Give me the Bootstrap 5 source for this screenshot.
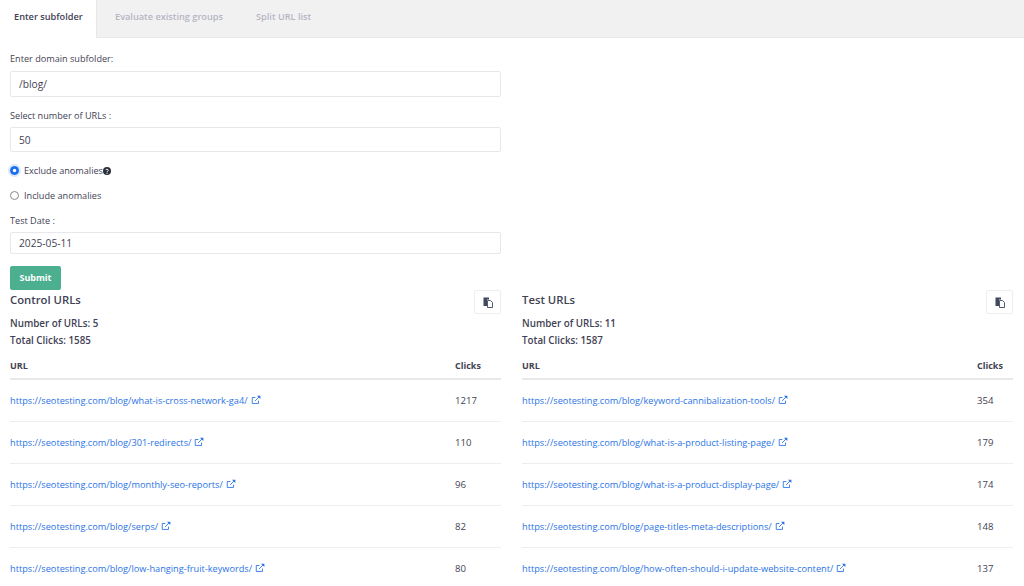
<!DOCTYPE html>
<html lang="en">
<head>
<meta charset="utf-8">
<title>URL groups</title>
<link href="https://cdn.jsdelivr.net/npm/bootstrap@5.3.0/dist/css/bootstrap.min.css" rel="stylesheet">
<style>
html,body{height:586px;overflow:hidden}
body{font-family:"Open Sans","Noto Sans",sans-serif;font-size:9.15px;color:#3f4254;background:#fff}
.tabbar{background:#f1f1f2;height:38px;border-bottom:1px solid #e8e8ea}
.tabitem{height:38px;padding:0 16px 5px;font-weight:600;font-size:9.2px;line-height:13px;color:#b5b5c3;border:0;background:transparent}
.tabitem.on{background:#fff;color:#3f4254;width:97px;padding:0 0 5px 14px;text-align:left;border-right:1px solid #e8e8ea}
.tabitem.second{padding-left:18px}
.tabitem.third{padding-left:17px}
.pagebody{padding:0 10px}
.formcol{width:491px;padding-top:14px}
.flabel{display:block;line-height:13px;margin:0 0 6px;color:#3f4254}
.flabel.tight{margin-bottom:5px}
.finput{height:26px;border:1px solid #e8e8ea;border-radius:2px;padding:0 8px;font-size:10.2px;color:#3f4254;display:block;width:100%;margin-bottom:12px;background:#fff}
.finput.mid{height:25px}
.finput.low{height:22px;margin-bottom:0}
.radioline{display:flex;align-items:center;gap:5px;height:13px;margin-bottom:12px;line-height:13px}
.radioline .form-check-input{width:9px;height:9px;margin:0;flex:none;border-color:#8a8a8a}
.radioline .form-check-input:checked{background-color:#1a6ff0;border-color:#1a6ff0;box-shadow:0 0 0 2px #dbe7fb}
.qmark{width:8px;height:8px;display:inline-block;vertical-align:-.5px}
.subbtn{background:#4caf8f;border:1px solid #4caf8f;color:#fff;font-weight:700;font-size:9px;border-radius:2px;width:51px;height:24px;padding:0;display:block;margin-top:12px}
.urlcols{display:grid;grid-template-columns:491px 491px;column-gap:21px}
.urlhead{display:flex;justify-content:space-between;align-items:flex-start;height:24.5px}
.urltitle{font-size:11.3px;font-weight:600;line-height:20px;margin:0;color:#3f4254}
.copybtn{width:27px;height:24px;border:1px solid #eeeef0;background:#fff;border-radius:2px;padding:0;display:flex;align-items:center;justify-content:center}
.copybtn svg{width:10px;height:11px}
.statline{font-weight:600;font-size:9.8px;line-height:17px;color:#3f4254}
.urltable{width:491px;margin:4.5px 0 0;table-layout:fixed;border-collapse:collapse}
.urltable th{font-weight:700;font-size:9px;color:#3f4254;height:26px;padding:0;border-bottom:2px solid #e8e8ea;vertical-align:middle}
.urltable td{height:42px;padding:2px 0 0;border-bottom:1px solid #eeeef0;font-size:9.2px;color:#3f4254;vertical-align:middle}
.urltable td.numcell{font-size:9.6px}
.clickcol{width:46px}
.clickcol.nar{width:36px}
.urltable a{color:#2a74e6;text-decoration:none}
.extico{width:10px;height:10px;vertical-align:-.5px;margin-left:3px}
</style>
</head>
<body>
<ul class="nav tabbar">
  <li class="nav-item"><button class="tabitem on" type="button">Enter subfolder</button></li>
  <li class="nav-item"><button class="tabitem second" type="button">Evaluate existing groups</button></li>
  <li class="nav-item"><button class="tabitem third" type="button">Split URL list</button></li>
</ul>
<main class="pagebody">
  <form class="formcol">
    <label class="flabel" for="sub">Enter domain subfolder:</label>
    <input class="finput" id="sub" value="/blog/">
    <label class="flabel tight" for="num">Select number of URLs :</label>
    <input class="finput mid" id="num" value="50">
    <div class="radioline"><input class="form-check-input" type="radio" name="an" id="ex" checked><label for="ex">Exclude anomalies<svg class="qmark" viewBox="0 0 16 16"><circle cx="8" cy="8" r="8" fill="#2b2f3a"/><path d="M5.5 6.2a2.6 2.6 0 0 1 5 .3c0 1.7-2.3 1.8-2.4 3.4" fill="none" stroke="#fff" stroke-width="1.9"/><circle cx="8.1" cy="12.3" r="1.2" fill="#fff"/></svg></label></div>
    <div class="radioline"><input class="form-check-input" type="radio" name="an" id="in"><label for="in">Include anomalies</label></div>
    <label class="flabel tight" for="dt">Test Date :</label>
    <input class="finput low" id="dt" value="2025-05-11">
    <button class="subbtn" type="button">Submit</button>
  </form>
  <div class="urlcols">
    <section>
      <div class="urlhead"><h2 class="urltitle">Control URLs</h2><button class="copybtn" type="button" aria-label="Copy"><svg viewBox="0 0 20 22"><path d="M1 1h11v4H8v13H1z" fill="#3f4a5f"/><path d="M9 7h6l4 4v10H9z" fill="#fff" stroke="#3f4a5f" stroke-width="1.8"/></svg></button></div>
      <div class="statline">Number of URLs: 5</div>
      <div class="statline">Total Clicks: 1585</div>
      <table class="urltable">
        <thead><tr><th>URL</th><th class="clickcol">Clicks</th></tr></thead>
        <tbody>
          <tr><td><a href="#">https://seotesting.com/blog/what-is-cross-network-ga4/<svg class="extico" viewBox="0 0 16 16"><path d="M12 9v4.5H2V4h5" fill="none" stroke="currentColor" stroke-width="1.4"/><path d="M6.5 9.5 14 2" stroke="currentColor" stroke-width="1.4"/><path d="M9.5 1H15v5.5z" fill="currentColor"/></svg></a></td><td class="numcell">1217</td></tr>
          <tr><td><a href="#">https://seotesting.com/blog/301-redirects/<svg class="extico" viewBox="0 0 16 16"><path d="M12 9v4.5H2V4h5" fill="none" stroke="currentColor" stroke-width="1.4"/><path d="M6.5 9.5 14 2" stroke="currentColor" stroke-width="1.4"/><path d="M9.5 1H15v5.5z" fill="currentColor"/></svg></a></td><td class="numcell">110</td></tr>
          <tr><td><a href="#">https://seotesting.com/blog/monthly-seo-reports/<svg class="extico" viewBox="0 0 16 16"><path d="M12 9v4.5H2V4h5" fill="none" stroke="currentColor" stroke-width="1.4"/><path d="M6.5 9.5 14 2" stroke="currentColor" stroke-width="1.4"/><path d="M9.5 1H15v5.5z" fill="currentColor"/></svg></a></td><td class="numcell">96</td></tr>
          <tr><td><a href="#">https://seotesting.com/blog/serps/<svg class="extico" viewBox="0 0 16 16"><path d="M12 9v4.5H2V4h5" fill="none" stroke="currentColor" stroke-width="1.4"/><path d="M6.5 9.5 14 2" stroke="currentColor" stroke-width="1.4"/><path d="M9.5 1H15v5.5z" fill="currentColor"/></svg></a></td><td class="numcell">82</td></tr>
          <tr><td><a href="#">https://seotesting.com/blog/low-hanging-fruit-keywords/<svg class="extico" viewBox="0 0 16 16"><path d="M12 9v4.5H2V4h5" fill="none" stroke="currentColor" stroke-width="1.4"/><path d="M6.5 9.5 14 2" stroke="currentColor" stroke-width="1.4"/><path d="M9.5 1H15v5.5z" fill="currentColor"/></svg></a></td><td class="numcell">80</td></tr>
        </tbody>
      </table>
    </section>
    <section>
      <div class="urlhead"><h2 class="urltitle">Test URLs</h2><button class="copybtn" type="button" aria-label="Copy"><svg viewBox="0 0 20 22"><path d="M1 1h11v4H8v13H1z" fill="#3f4a5f"/><path d="M9 7h6l4 4v10H9z" fill="#fff" stroke="#3f4a5f" stroke-width="1.8"/></svg></button></div>
      <div class="statline">Number of URLs: 11</div>
      <div class="statline">Total Clicks: 1587</div>
      <table class="urltable">
        <thead><tr><th>URL</th><th class="clickcol nar">Clicks</th></tr></thead>
        <tbody>
          <tr><td><a href="#">https://seotesting.com/blog/keyword-cannibalization-tools/<svg class="extico" viewBox="0 0 16 16"><path d="M12 9v4.5H2V4h5" fill="none" stroke="currentColor" stroke-width="1.4"/><path d="M6.5 9.5 14 2" stroke="currentColor" stroke-width="1.4"/><path d="M9.5 1H15v5.5z" fill="currentColor"/></svg></a></td><td class="numcell">354</td></tr>
          <tr><td><a href="#">https://seotesting.com/blog/what-is-a-product-listing-page/<svg class="extico" viewBox="0 0 16 16"><path d="M12 9v4.5H2V4h5" fill="none" stroke="currentColor" stroke-width="1.4"/><path d="M6.5 9.5 14 2" stroke="currentColor" stroke-width="1.4"/><path d="M9.5 1H15v5.5z" fill="currentColor"/></svg></a></td><td class="numcell">179</td></tr>
          <tr><td><a href="#">https://seotesting.com/blog/what-is-a-product-display-page/<svg class="extico" viewBox="0 0 16 16"><path d="M12 9v4.5H2V4h5" fill="none" stroke="currentColor" stroke-width="1.4"/><path d="M6.5 9.5 14 2" stroke="currentColor" stroke-width="1.4"/><path d="M9.5 1H15v5.5z" fill="currentColor"/></svg></a></td><td class="numcell">174</td></tr>
          <tr><td><a href="#">https://seotesting.com/blog/page-titles-meta-descriptions/<svg class="extico" viewBox="0 0 16 16"><path d="M12 9v4.5H2V4h5" fill="none" stroke="currentColor" stroke-width="1.4"/><path d="M6.5 9.5 14 2" stroke="currentColor" stroke-width="1.4"/><path d="M9.5 1H15v5.5z" fill="currentColor"/></svg></a></td><td class="numcell">148</td></tr>
          <tr><td><a href="#">https://seotesting.com/blog/how-often-should-i-update-website-content/<svg class="extico" viewBox="0 0 16 16"><path d="M12 9v4.5H2V4h5" fill="none" stroke="currentColor" stroke-width="1.4"/><path d="M6.5 9.5 14 2" stroke="currentColor" stroke-width="1.4"/><path d="M9.5 1H15v5.5z" fill="currentColor"/></svg></a></td><td class="numcell">137</td></tr>
        </tbody>
      </table>
    </section>
  </div>
</main>
<script src="https://cdn.jsdelivr.net/npm/bootstrap@5.3.0/dist/js/bootstrap.bundle.min.js"></script>
</body>
</html>
